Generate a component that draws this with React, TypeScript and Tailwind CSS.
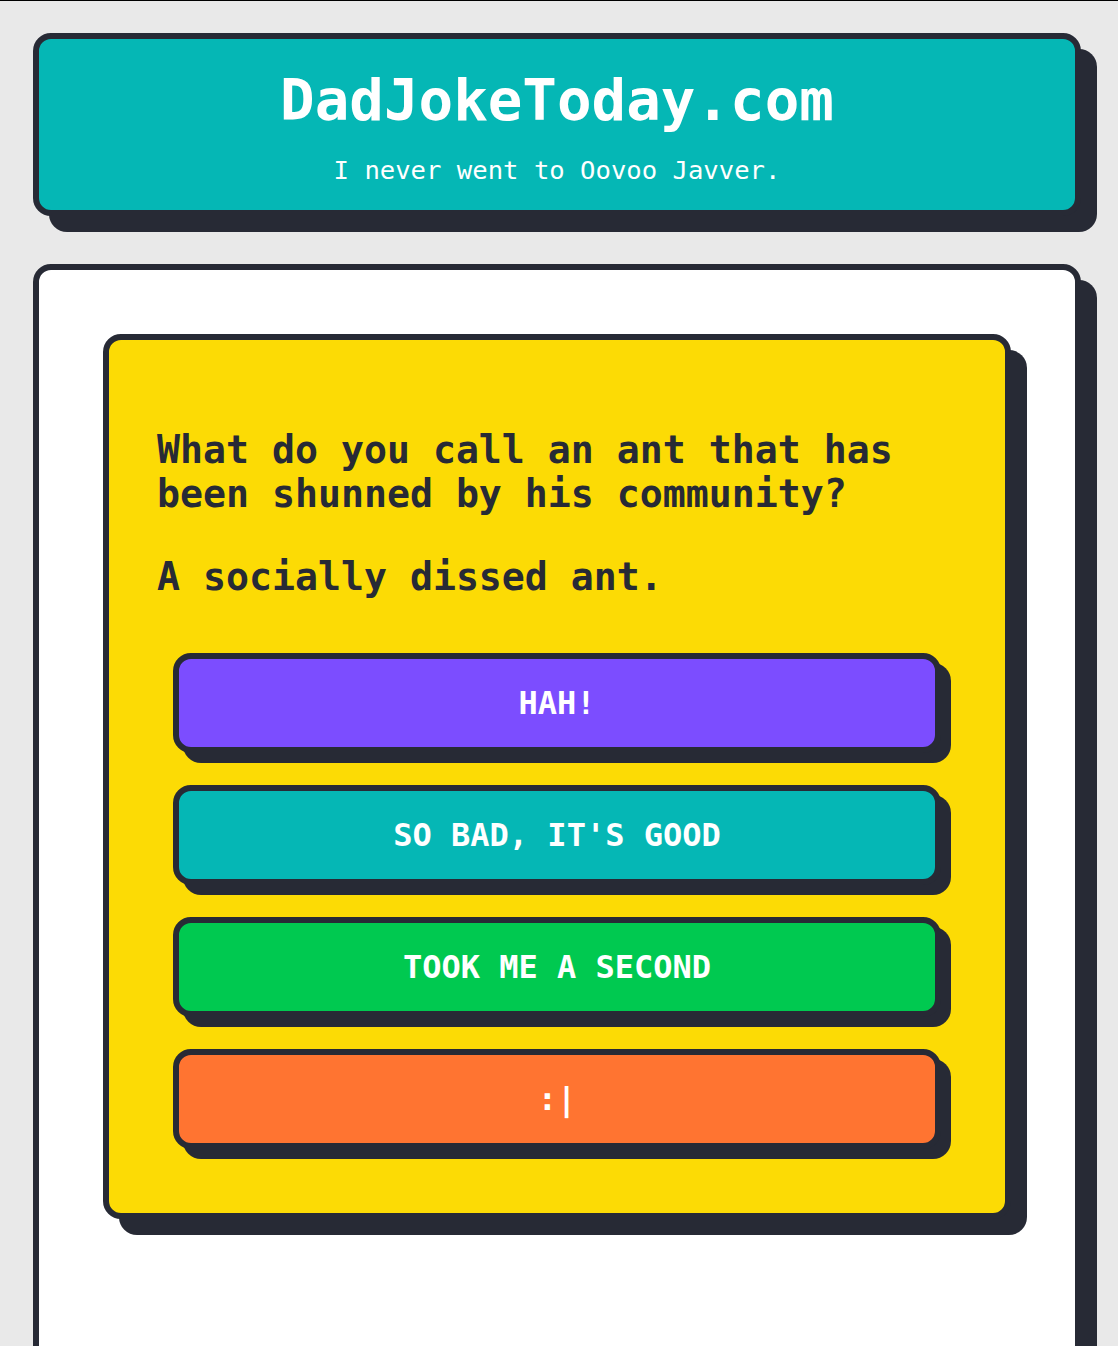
import React from 'react';

const mono = { fontFamily: '"DejaVu Sans Mono", "Liberation Mono", monospace' };

const buttons = [
  { label: 'HAH!', color: 'bg-[#7c4dff]' },
  { label: "SO BAD, IT'S GOOD", color: 'bg-[#05b7b5]' },
  { label: 'TOOK ME A SECOND', color: 'bg-[#00c950]' },
  { label: ':|', color: 'bg-[#ff7431]' },
];

const VoteButton: React.FC<{ label: string; color: string }> = ({ label, color }) => (
  <button
    className={`flex h-[100px] w-full items-center justify-center rounded-[18px] border-[6px] border-[#272a35] ${color} text-[32px] font-bold leading-none text-white shadow-[10px_10px_0_#272a35]`}
    style={mono}
  >
    {label}
  </button>
);

export default function App() {
  return (
    <div className="min-h-screen border-t border-black bg-[#e9e9e9] pl-[33px] pr-[37px] pt-[32px]" style={mono}>
      <header className="rounded-[18px] border-[6px] border-[#272a35] bg-[#05b7b5] pb-[21px] pt-[33px] text-center text-white shadow-[16px_16px_0_#272a35]">
        <h1 className="text-[57.5px] font-bold leading-none">DadJokeToday.com</h1>
        <p className="mt-[21px] text-[25.6px] leading-[1.5]">I never went to Oovoo Javver.</p>
      </header>

      <main className="mt-[48px] rounded-[18px] border-[6px] border-[#272a35] bg-white px-16 pb-[160px] pt-16 shadow-[16px_16px_0_#272a35]">
        <div className="rounded-[18px] border-[6px] border-[#272a35] bg-[#fcdb05] p-12 text-[#272a35] shadow-[16px_16px_0_#272a35]">
          <p className="mt-[40px] text-[38.2px] font-bold leading-[44px]">
            What do you call an ant that has been shunned by his community?
          </p>
          <p className="mt-[39px] text-[38.2px] font-bold leading-[44px]">A socially dissed ant.</p>
          <div className="mx-4 mb-4 mt-[54px] flex flex-col gap-8">
            {buttons.map((b) => (
              <VoteButton key={b.label} label={b.label} color={b.color} />
            ))}
          </div>
        </div>
      </main>
    </div>
  );
}
